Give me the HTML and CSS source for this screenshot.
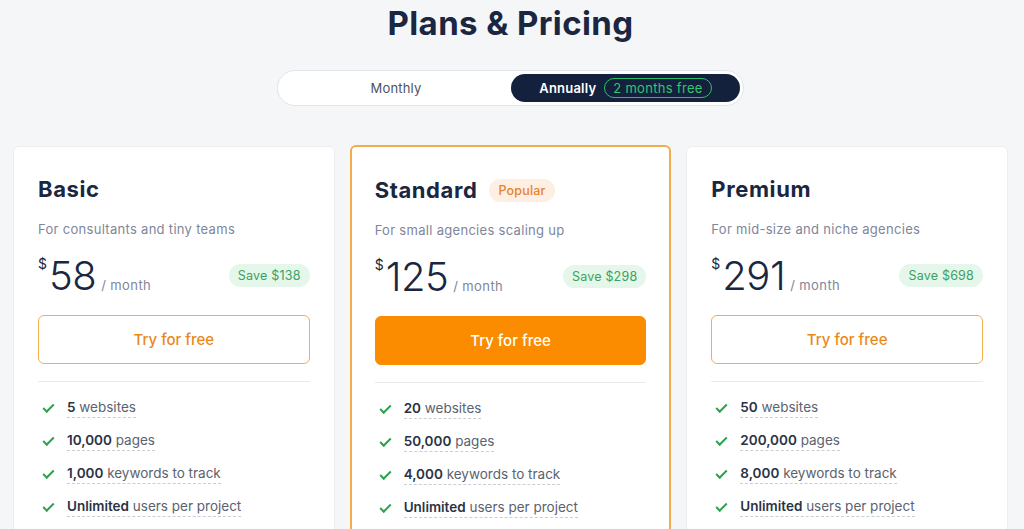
FILE: index.html
```html
<!DOCTYPE html>
<html lang="en">
<head>
    <meta charset="UTF-8">
    <title>Plans &amp; Pricing</title>
    <link rel="stylesheet" href="styles.css">
</head>
<body>
    <h1 class="page-title">Plans &amp; Pricing</h1>

    <div class="toggle-wrap">
        <div class="toggle">
            <button class="toggle-opt">Monthly</button>
            <button class="toggle-opt active">Annually <span class="free-tag">2 months free</span></button>
        </div>
    </div>

    <div class="plans">
        <div class="plan">
            <h2 class="plan-name">Basic</h2>
            <p class="plan-desc">For consultants and tiny teams</p>
            <div class="price-row">
                <div class="price"><span class="cur">$</span><span class="amount">58</span><span class="per">/ month</span></div>
                <span class="save">Save $138</span>
            </div>
            <button class="try">Try for free</button>
            <ul class="features">
                <li><span class="check"></span><span class="feat"><b>5</b> websites</span></li>
                <li><span class="check"></span><span class="feat"><b>10,000</b> pages</span></li>
                <li><span class="check"></span><span class="feat"><b>1,000</b> keywords to track</span></li>
                <li><span class="check"></span><span class="feat"><b>Unlimited</b> users per project</span></li>
            </ul>
        </div>

        <div class="plan featured">
            <h2 class="plan-name">Standard <span class="popular">Popular</span></h2>
            <p class="plan-desc">For small agencies scaling up</p>
            <div class="price-row">
                <div class="price"><span class="cur">$</span><span class="amount">125</span><span class="per">/ month</span></div>
                <span class="save">Save $298</span>
            </div>
            <button class="try filled">Try for free</button>
            <ul class="features">
                <li><span class="check"></span><span class="feat"><b>20</b> websites</span></li>
                <li><span class="check"></span><span class="feat"><b>50,000</b> pages</span></li>
                <li><span class="check"></span><span class="feat"><b>4,000</b> keywords to track</span></li>
                <li><span class="check"></span><span class="feat"><b>Unlimited</b> users per project</span></li>
            </ul>
        </div>

        <div class="plan">
            <h2 class="plan-name">Premium</h2>
            <p class="plan-desc">For mid-size and niche agencies</p>
            <div class="price-row">
                <div class="price"><span class="cur">$</span><span class="amount">291</span><span class="per">/ month</span></div>
                <span class="save">Save $698</span>
            </div>
            <button class="try">Try for free</button>
            <ul class="features">
                <li><span class="check"></span><span class="feat"><b>50</b> websites</span></li>
                <li><span class="check"></span><span class="feat"><b>200,000</b> pages</span></li>
                <li><span class="check"></span><span class="feat"><b>8,000</b> keywords to track</span></li>
                <li><span class="check"></span><span class="feat"><b>Unlimited</b> users per project</span></li>
            </ul>
        </div>
    </div>
</body>
</html>
```

FILE: styles.css
```css
body {
    font-family: Inter, "Noto Sans", sans-serif;
    margin: 0;
    padding: 0 16px 0 13px;
    background: #f5f6f8;
    color: #1b2640;
    overflow: hidden;
}
.page-title {
    margin: 3px 0 0;
    font-size: 33px;
    font-weight: 700;
    letter-spacing: 0.4px;
    text-align: center;
    line-height: 40px;
    color: #1b2640;
}
.toggle-wrap {
    display: flex;
    justify-content: center;
    margin-top: 27px;
}
.toggle {
    display: flex;
    width: 467px;
    height: 36px;
    box-sizing: border-box;
    padding: 3px;
    background: #fff;
    border: 1px solid #e1e4ea;
    border-radius: 18px;
}
.toggle-opt {
    flex: 1;
    border: none;
    background: none;
    font-family: inherit;
    font-size: 13px;
    letter-spacing: 0.2px;
    color: #4b5363;
    border-radius: 14px;
    display: flex;
    align-items: center;
    justify-content: center;
    gap: 8px;
    padding: 0;
}
.toggle-opt.active {
    flex: 0 0 229px;
    background: #14213d;
    color: #fff;
    font-weight: 600;
}
.free-tag {
    border: 1px solid #2fbf6a;
    color: #35c46f;
    border-radius: 10px;
    padding: 1px 8px;
    font-weight: 400;
    font-size: 13px;
    letter-spacing: 0.3px;
}
.plans {
    display: grid;
    grid-template-columns: repeat(3, 1fr);
    gap: 15px;
    margin-top: 40px;
}
.plan {
    background: #fff;
    border: 1px solid #eceef1;
    border-radius: 6px;
    padding: 28px 24px 40px;
    height: 420px;
}
.plan.featured {
    border: 2px solid #f3ac4c;
    margin-top: -1px;
    padding: 29px 23px 40px;
}
.plan-name {
    margin: 0;
    font-size: 22px;
    font-weight: 700;
    letter-spacing: 0.6px;
    line-height: 28px;
    display: flex;
    align-items: center;
    gap: 12px;
}
.popular {
    font-size: 12.5px;
    font-weight: 500;
    letter-spacing: 0.2px;
    color: #e9822b;
    background: #fdefe1;
    border-radius: 12px;
    padding: 3px 9px;
    line-height: 17px;
}
.plan-desc {
    margin: 18px 0 0;
    font-size: 13px;
    letter-spacing: 0.3px;
    color: #80869a;
}
.price-row {
    display: flex;
    justify-content: space-between;
    align-items: center;
    margin-top: 16px;
    height: 44px;
}
.price {
    display: flex;
    align-items: baseline;
}
.cur {
    font-size: 14px;
    align-self: flex-start;
    margin-top: 4px;
    margin-right: 2px;
}
.amount {
    font-size: 40px;
    font-weight: 300;
    letter-spacing: -0.5px;
}
.per {
    font-size: 13px;
    letter-spacing: 0.4px;
    color: #80869a;
    margin-left: 5px;
}
.save {
    background: #e4f7ea;
    color: #3aa160;
    font-size: 12.5px;
    letter-spacing: 0.2px;
    border-radius: 12px;
    padding: 4px 9px;
}
.try {
    display: block;
    width: 100%;
    height: 49px;
    margin-top: 18px;
    background: #fff;
    border: 1px solid #f0b04e;
    border-radius: 6px;
    color: #e8891a;
    font-family: inherit;
    font-size: 15px;
    font-weight: 500;
}
.try.filled {
    background: #fb8c00;
    border-color: #fb8c00;
    color: #fff;
}
.features {
    list-style: none;
    margin: 17px 0 0;
    padding: 10px 0 0;
    border-top: 1px solid #e9eaed;
}
.features li {
    display: flex;
    align-items: center;
    height: 33px;
    font-size: 13.5px;
    color: #5b6270;
}
.check {
    width: 9px;
    height: 4px;
    border-left: 2px solid #2ea14f;
    border-bottom: 2px solid #2ea14f;
    transform: rotate(-45deg);
    margin: -4px 13px 0 5px;
}
.feat {
    border-bottom: 1px dashed #c9cdd4;
    padding-bottom: 2px;
}
.feat b {
    color: #2a3245;
    font-weight: 600;
}
```
